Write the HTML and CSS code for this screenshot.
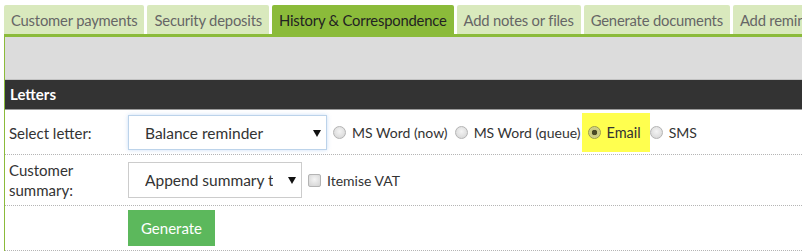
FILE: index.html
```html
<!DOCTYPE html>
<html lang="en">
<head>
    <meta charset="UTF-8">
    <meta name="viewport" content="width=device-width, initial-scale=1.0">
    <title>History &amp; Correspondence</title>
    <link rel="stylesheet" href="styles.css">
</head>
<body>

<div class="page">
    <ul class="tabs">
        <li class="tab">Customer payments</li>
        <li class="tab">Security deposits</li>
        <li class="tab active">History &amp; Correspondence</li>
        <li class="tab">Add notes or files</li>
        <li class="tab">Generate documents</li>
        <li class="tab">Add reminder</li>
    </ul>

    <div class="panel">
        <div class="toolbar"></div>
        <div class="section-title">Letters</div>

        <div class="form-row first">
            <div class="form-label">Select letter:</div>
            <div class="form-value">
                <span class="select-wrap focused">
                    <select id="letter">
                        <option>Balance reminder</option>
                        <option>Overdue notice</option>
                    </select>
                </span>
                <label class="choice"><input type="radio" name="output"> MS Word (now)</label>
                <label class="choice"><input type="radio" name="output"> MS Word (queue)</label>
                <label class="choice marked"><input type="radio" name="output" checked> Email</label>
                <label class="choice"><input type="radio" name="output"> SMS</label>
            </div>
        </div>

        <div class="form-row tall">
            <div class="form-label">Customer<br>summary:</div>
            <div class="form-value">
                <span class="select-wrap narrow">
                    <select id="summary">
                        <option>Append summary to letter</option>
                        <option>No summary</option>
                    </select>
                </span>
                <label class="choice"><input type="checkbox"> Itemise VAT</label>
            </div>
        </div>

        <div class="form-row">
            <div class="form-label"></div>
            <div class="form-value">
                <button class="btn-generate">Generate</button>
            </div>
        </div>
    </div>
</div>

</body>
</html>
```

FILE: styles.css
```css
body {
    margin: 0;
    background: #fff;
    font-family: Lato, "Open Sans", sans-serif;
    font-size: 15px;
    color: #333;
    overflow: hidden;
}

.page {
    padding: 5px 0 0 4px;
    width: 900px;
}

/* tabs */
.tabs {
    list-style: none;
    margin: 0;
    padding: 0;
    display: flex;
    gap: 3px;
    white-space: nowrap;
}

.tab {
    height: 29px;
    line-height: 30px;
    padding: 0 7px;
    font-size: 14.8px;
    letter-spacing: -0.2px;
    background: #d9e9bd;
    color: #666;
    border-radius: 2px 2px 0 0;
}

.tab.active {
    background: #8bbb3a;
    color: #222;
}

/* panel */
.panel {
    border-top: 3px solid #8bbb3a;
    border-left: 1px solid #8bbb3a;
}

.toolbar {
    height: 42px;
    background: #dcdcdc;
    border-bottom: 1px solid #c2c2c2;
}

.section-title {
    height: 29px;
    line-height: 29px;
    padding-left: 5px;
    background: #333;
    color: #fff;
    font-weight: bold;
    border-bottom: 1px solid #9a9a9a;
}

.form-row {
    display: grid;
    grid-template-columns: 123px 1fr;
    align-items: center;
    padding: 4px 0;
    border-bottom: 1px dotted #b5b5b5;
}

.form-row.first {
    padding: 3px 0 2px;
}

.form-row.tall {
    padding: 5px 0;
}

.form-label {
    padding-left: 4px;
    line-height: 20px;
}

.form-value {
    display: flex;
    align-items: center;
}

/* selects */
.select-wrap {
    position: relative;
    display: inline-block;
    margin-right: 6px;
}

.select-wrap::after {
    content: "";
    position: absolute;
    right: 6px;
    top: 50%;
    margin-top: -3px;
    border-left: 4px solid transparent;
    border-right: 4px solid transparent;
    border-top: 7px solid #111;
    pointer-events: none;
}

.select-wrap select {
    appearance: none;
    -webkit-appearance: none;
    width: 199px;
    height: 35px;
    padding: 0 24px 0 16px;
    font-family: inherit;
    font-size: 15.5px;
    color: #333;
    background: #fff;
    border: 1px solid #ccc;
    border-radius: 0;
    outline: none;
}

.select-wrap.focused select {
    border-color: #bcd3ea;
    box-shadow: 0 0 4px rgba(102, 160, 233, 0.35);
}

.select-wrap.narrow select {
    width: 174px;
    height: 36px;
    padding-right: 28px;
}

/* radios and checkboxes */
.choice {
    display: flex;
    align-items: center;
    gap: 6px;
    margin-right: 7px;
    font-size: 14px;
    white-space: nowrap;
}

.choice input {
    appearance: none;
    -webkit-appearance: none;
    margin: 0;
    width: 13px;
    height: 13px;
    border: 1px solid #b4b4b4;
    background: radial-gradient(circle at 50% 40%, #f4f4f4, #d2d2d2);
}

.choice input[type="radio"] {
    border-radius: 50%;
}

.choice input[type="checkbox"] {
    border-radius: 2px;
}

.choice input:checked {
    background: radial-gradient(circle, #4a4a26 0 2.5px, #c9c97c 3px, #dcdc9a 100%);
    border-color: #9c9c4c;
}

.choice.marked {
    height: 39px;
    padding: 0 9px 0 6px;
    margin: 0 0 0 -6px;
    font-size: 14.5px;
    background: #ffff4f;
}

/* button */
.btn-generate {
    height: 36px;
    padding: 0 13px;
    border: none;
    background: #5cb85c;
    color: #fff;
    font-family: inherit;
    font-size: 15px;
    cursor: pointer;
}
```
